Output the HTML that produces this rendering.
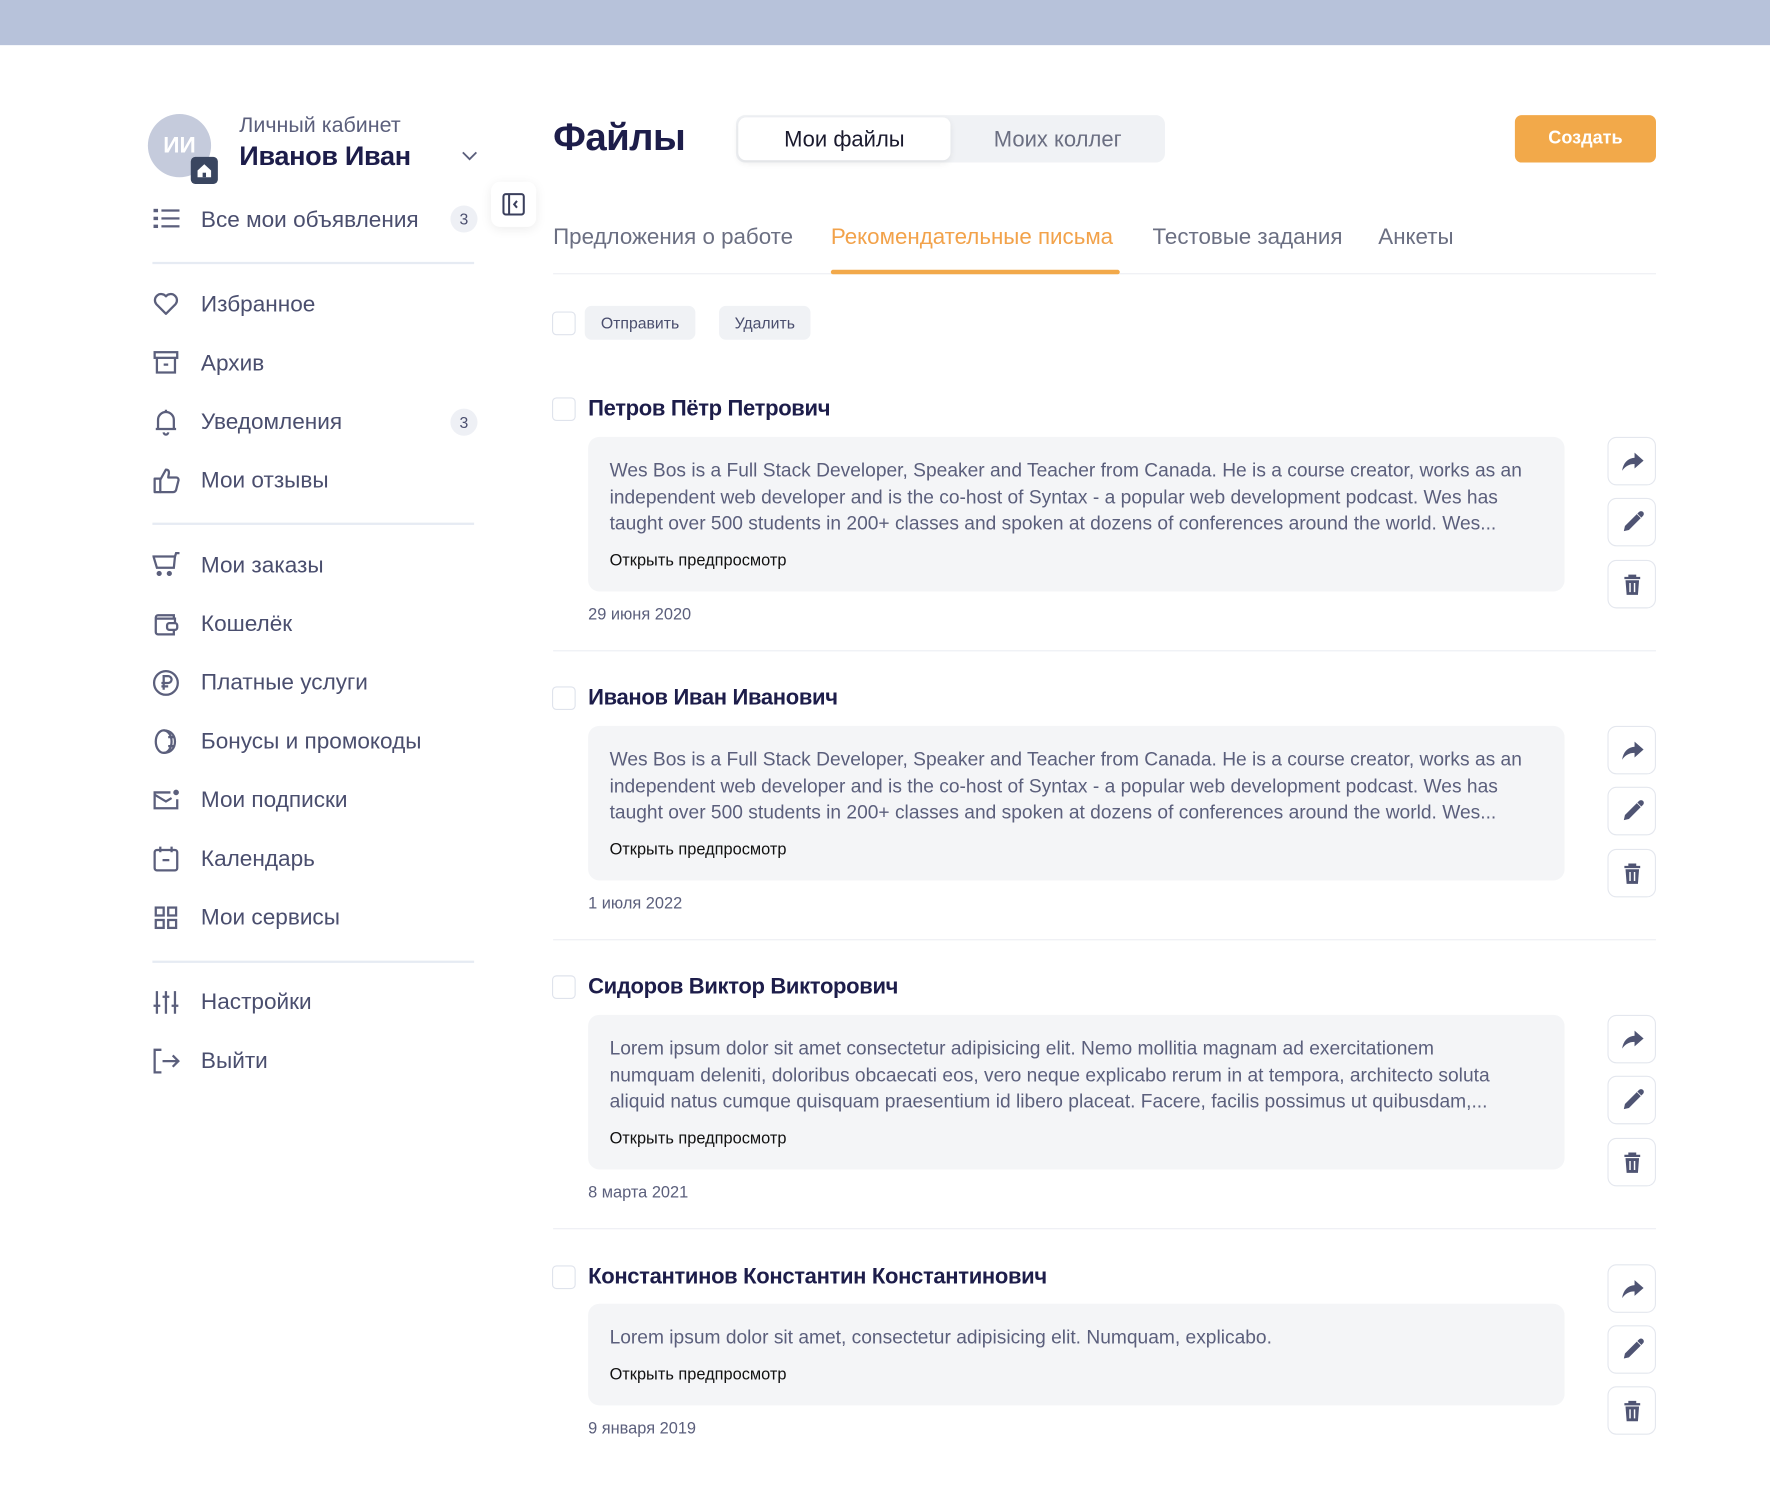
<!DOCTYPE html>
<html><head><meta charset="utf-8"><style>
html,body{margin:0;padding:0;background:#fff;width:1770px;height:1508px;overflow:hidden}
#w{position:absolute;left:0;top:0;width:1568px;height:1336px;transform:scale(1.12883);transform-origin:0 0;font-family:"Liberation Sans",sans-serif}
.a{position:absolute;white-space:nowrap}
.top{left:0;top:0;width:1568px;height:40px;background:#b7c2da}
.mi{position:absolute;left:135px;height:30px;width:300px}
.mi svg{position:absolute;left:0;top:3px}
.mi span{position:absolute;left:43px;top:5px;font-size:20px;color:#4a4e6e}
.badge{position:absolute;left:399px;width:24px;height:24px;border-radius:12px;background:#eef0f5;font-size:14px;color:#4a4e6e;text-align:center;line-height:24px}
.div{position:absolute;left:135px;width:285px;height:2px;background:#e6ebf3}
.tab{position:absolute;top:199px;font-size:19.8px;color:#6b6f82}
.cb{position:absolute;width:19px;height:19px;border:1px solid #dfe3ec;border-radius:4px;background:#fff}
.nm{position:absolute;left:521px;font-size:19.5px;font-weight:bold;color:#1d1d4a;letter-spacing:-0.3px}
.box{position:absolute;left:521px;width:865px;background:#f4f5f7;border-radius:10px}
.box p{margin:0;position:absolute;left:19px;top:18px;width:835px;font-size:17px;line-height:23.7px;color:#5b5f7c}
.box b{position:absolute;left:19px;font-size:14.5px;font-weight:normal;color:#111}
.dt{position:absolute;left:521px;font-size:14.5px;color:#5b5f7c}
.sep{position:absolute;left:490px;width:977px;height:1px;background:#eceef3}
.ab{position:absolute;left:1424px;width:41px;height:41px;border:1px solid #e4e7ee;border-radius:8px;background:#fff}
.ab svg{position:absolute;left:10px;top:10px}
</style></head><body><div id="w">
<div class="a top"></div>
<div class="a" style="left:131px;top:101px;width:56px;height:56px;border-radius:28px;background:#c5cbdc;color:#fff;font-weight:bold;font-size:20px;text-align:center;line-height:56px">ИИ</div>
<div class="a" style="left:169px;top:139px;width:24px;height:24px;border-radius:4px;background:#3a4660"><svg width="24" height="24" viewBox="0 0 24 24"><path d="M6 12 L12 6.5 L18 12 V18 H6 Z" fill="#fff"/><rect x="10.5" y="14" width="3" height="4" fill="#3a4660"/></svg></div>
<div class="a" style="left:212px;top:101px;font-size:19px;color:#5b5f7c">Личный кабинет</div>
<div class="a" style="left:212px;top:125px;font-size:24px;font-weight:bold;color:#1d1d4a;letter-spacing:-0.3px">Иванов Иван</div>
<svg class="a" style="left:408px;top:133px" width="16" height="10" viewBox="0 0 16 10"><path d="M2 2 L8 8 L14 2" stroke="#5b5f7c" stroke-width="1.6" fill="none"/></svg>
<div class="a" style="left:435px;top:161px;width:40px;height:40px;border-radius:8px;background:#fff;box-shadow:0 2px 10px rgba(0,0,0,.08)"><svg width="40" height="40" viewBox="0 0 40 40"><rect x="11" y="11" width="18" height="18" rx="2" stroke="#3a3f5c" stroke-width="1.8" fill="none"/><path d="M16 11 V29" stroke="#3a3f5c" stroke-width="1.8"/><path d="M23 17 L20.5 20 L23 23" stroke="#3a3f5c" stroke-width="1.8" fill="none"/></svg></div>

<div class="mi" style="top:179px"><svg width="26" height="24" viewBox="0 0 26 24" fill="#5b5f7c"><rect x="1" y="3" width="4" height="3"/><rect x="1" y="10" width="4" height="3"/><rect x="1" y="17" width="4" height="3"/><rect x="8" y="3.5" width="16" height="2"/><rect x="8" y="10.5" width="16" height="2"/><rect x="8" y="17.5" width="16" height="2"/></svg><span>Все мои объявления</span></div>
<div class="badge" style="top:182px">3</div>
<div class="div" style="top:232px"></div>
<div class="mi" style="top:254px"><svg width="26" height="24" viewBox="0 0 26 24"><path d="M12 21 L3.5 12.5 A5 5 0 0 1 12 5.5 A5 5 0 0 1 20.5 12.5 Z" stroke="#5b5f7c" stroke-width="2" fill="none" stroke-linejoin="round"/></svg><span>Избранное</span></div>
<div class="mi" style="top:306px"><svg width="26" height="24" viewBox="0 0 26 24" fill="none" stroke="#5b5f7c" stroke-width="2"><rect x="2" y="3" width="20" height="5"/><path d="M4 8 V21 H20 V8"/><path d="M10 14 H14"/></svg><span>Архив</span></div>
<div class="mi" style="top:358px"><svg width="26" height="26" viewBox="0 0 26 26" fill="none" stroke="#5b5f7c" stroke-width="2"><path d="M5 19 V11 A7 7 0 0 1 19 11 V19 H21 H3 Z"/><path d="M10 22 A2 2 0 0 0 14 22"/><path d="M12 2 V4"/></svg><span>Уведомления</span></div>
<div class="badge" style="top:362px">3</div>
<div class="mi" style="top:410px"><svg width="26" height="26" viewBox="0 0 26 26" fill="none" stroke="#5b5f7c" stroke-width="2" stroke-linejoin="round"><rect x="2" y="11" width="5" height="12"/><path d="M7 12 L12 3 C14 3 15 4 14.5 7 L14 10 H21 C23 10 23.5 12 23 13 L21 21 C20.5 22.5 19.5 23 18 23 H7"/></svg><span>Мои отзывы</span></div>
<div class="div" style="top:463px"></div>
<div class="mi" style="top:485px"><svg width="26" height="26" viewBox="0 0 26 26" fill="none" stroke="#5b5f7c" stroke-width="2"><path d="M1 5 H20 L19 15 H4 Z"/><path d="M20 5 L21 2 H24"/><circle cx="6" cy="20" r="1.3" fill="#5b5f7c"/><circle cx="15" cy="20" r="1.3" fill="#5b5f7c"/></svg><span>Мои заказы</span></div>
<div class="mi" style="top:537px"><svg width="26" height="26" viewBox="0 0 26 26" fill="none" stroke="#5b5f7c" stroke-width="2"><path d="M19 7 V5 H5 A2 2 0 0 0 3 7 V20 A2 2 0 0 0 5 22 H19 V18"/><path d="M3 8 H20 V12"/><rect x="13" y="12" width="9" height="6" rx="2"/></svg><span>Кошелёк</span></div>
<div class="mi" style="top:589px"><svg width="26" height="26" viewBox="0 0 26 26" fill="none" stroke="#5b5f7c" stroke-width="2"><circle cx="12" cy="13" r="10.5"/><path d="M10 19 V7 H14 A3 3 0 0 1 14 13 H8 M8 16 H14"/></svg><span>Платные услуги</span></div>
<div class="mi" style="top:641px"><svg width="26" height="26" viewBox="0 0 26 26" fill="none" stroke="#5b5f7c" stroke-width="2"><ellipse cx="10" cy="13" rx="7" ry="10"/><path d="M10 3 C17 3 20 8 20 13 C20 18 17 23 10 23"/><path d="M14 9 H19 M14 17 H19"/></svg><span>Бонусы и промокоды</span></div>
<div class="mi" style="top:693px"><svg width="26" height="26" viewBox="0 0 26 26" fill="none" stroke="#5b5f7c" stroke-width="2"><path d="M16 6 H2 V20 H22 V12"/><path d="M2 8 L12 14 L17 11"/><circle cx="21" cy="6" r="1.5" fill="#5b5f7c"/></svg><span>Мои подписки</span></div>
<div class="mi" style="top:745px"><svg width="26" height="26" viewBox="0 0 26 26" fill="none" stroke="#5b5f7c" stroke-width="2"><rect x="2" y="5" width="20" height="18" rx="2"/><path d="M7 2 V7 M17 2 V7 M9 14 H15"/></svg><span>Календарь</span></div>
<div class="mi" style="top:797px"><svg width="26" height="26" viewBox="0 0 26 26" fill="none" stroke="#5b5f7c" stroke-width="2"><rect x="3" y="4" width="7" height="7"/><rect x="14" y="4" width="7" height="7"/><rect x="3" y="15" width="7" height="7"/><rect x="14" y="15" width="7" height="7"/></svg><span>Мои сервисы</span></div>
<div class="div" style="top:851px"></div>
<div class="mi" style="top:872px"><svg width="26" height="26" viewBox="0 0 26 26" fill="none" stroke="#5b5f7c" stroke-width="2"><path d="M4 3 V23 M12 3 V23 M20 3 V23 M1 16 H7 M9 8 H15 M17 16 H23"/></svg><span>Настройки</span></div>
<div class="mi" style="top:924px"><svg width="26" height="26" viewBox="0 0 26 26" fill="none" stroke="#5b5f7c" stroke-width="2"><path d="M8 3 H2 V23 H8"/><path d="M9 13 H23 M18 8 L23 13 L18 18"/></svg><span>Выйти</span></div>

<div class="a" style="left:490px;top:103px;font-size:34px;font-weight:bold;color:#1d1d4a;letter-spacing:-0.5px">Файлы</div>
<div class="a" style="left:652px;top:102px;width:380px;height:42px;border-radius:8px;background:#f0f2f5"></div>
<div class="a" style="left:654px;top:104px;width:188px;height:38px;border-radius:7px;background:#fff;box-shadow:0 2px 6px rgba(0,0,0,.08);font-size:19.5px;color:#1a1a2e;text-align:center;line-height:40px">Мои файлы</div>
<div class="a" style="left:842px;top:104px;width:190px;height:38px;font-size:19.5px;color:#6b6f82;text-align:center;line-height:40px">Моих коллег</div>
<div class="a" style="left:1342px;top:102px;width:125px;height:42px;border-radius:6px;background:#f2a94a;color:#fff;font-weight:bold;font-size:16px;text-align:center;line-height:42px">Создать</div>

<div class="tab" style="left:490px">Предложения о работе</div>
<div class="tab" style="left:736px;color:#f2a24a">Рекомендательные письма</div>
<div class="tab" style="left:1021px">Тестовые задания</div>
<div class="tab" style="left:1221px">Анкеты</div>
<div class="a" style="left:490px;top:242px;width:977px;height:1px;background:#eceef3"></div>
<div class="a" style="left:736px;top:239px;width:256px;height:4px;border-radius:2px;background:#f2a94a"></div>

<div class="cb" style="left:489px;top:276px"></div>
<div class="a" style="left:518px;top:271px;width:98px;height:30px;border-radius:6px;background:#f0f2f5;font-size:14px;color:#4a4e6e;text-align:center;line-height:31px">Отправить</div>
<div class="a" style="left:637px;top:271px;width:81px;height:30px;border-radius:6px;background:#f0f2f5;font-size:14px;color:#4a4e6e;text-align:center;line-height:31px">Удалить</div>

<div class="cb" style="left:489px;top:352px"></div>
<div class="nm" style="top:351px">Петров Пётр Петрович</div>
<div class="box" style="top:387px;height:137px"><p>Wes Bos is a Full Stack Developer, Speaker and Teacher from Canada. He is a course creator, works as an independent web developer and is the co-host of Syntax - a popular web development podcast. Wes has taught over 500 students in 200+ classes and spoken at dozens of conferences around the world. Wes...</p><b style="top:102px">Открыть предпросмотр</b></div>
<div class="dt" style="top:537px">29 июня 2020</div>
<div class="sep" style="top:576px"></div>

<div class="cb" style="left:489px;top:608px"></div>
<div class="nm" style="top:607px">Иванов Иван Иванович</div>
<div class="box" style="top:643px;height:137px"><p>Wes Bos is a Full Stack Developer, Speaker and Teacher from Canada. He is a course creator, works as an independent web developer and is the co-host of Syntax - a popular web development podcast. Wes has taught over 500 students in 200+ classes and spoken at dozens of conferences around the world. Wes...</p><b style="top:102px">Открыть предпросмотр</b></div>
<div class="dt" style="top:793px">1 июля 2022</div>
<div class="sep" style="top:832px"></div>

<div class="cb" style="left:489px;top:864px"></div>
<div class="nm" style="top:863px">Сидоров Виктор Викторович</div>
<div class="box" style="top:899px;height:137px"><p style="width:790px">Lorem ipsum dolor sit amet consectetur adipisicing elit. Nemo mollitia magnam ad exercitationem numquam deleniti, doloribus obcaecati eos, vero neque explicabo rerum in at tempora, architecto soluta aliquid natus cumque quisquam praesentium id libero placeat. Facere, facilis possimus ut quibusdam,...</p><b style="top:102px">Открыть предпросмотр</b></div>
<div class="dt" style="top:1049px">8 марта 2021</div>
<div class="sep" style="top:1088px"></div>

<div class="cb" style="left:489px;top:1121px"></div>
<div class="nm" style="top:1120px">Константинов Константин Константинович</div>
<div class="box" style="top:1155px;height:90px"><p>Lorem ipsum dolor sit amet, consectetur adipisicing elit. Numquam, explicabo.</p><b style="top:55px">Открыть предпросмотр</b></div>
<div class="dt" style="top:1258px">9 января 2019</div>

<div id="btns"></div>
</div>
<script>
var tops=[[387,441,496],[643,697,752],[899,953,1008],[1120,1174,1228]];
var share='<svg width="22" height="22" viewBox="0 0 22 22"><path d="M13 3 L21 10 L13 17 V13 C8 13 5 15 2 19 C3 12 7 8 13 7.5 Z" fill="#4f5473"/></svg>';
var pen='<svg width="22" height="22" viewBox="0 0 22 22"><path d="M15 3.5 L18.5 7 L8 17.5 L3.5 18.5 L4.5 14 Z" fill="#4f5473"/><path d="M15.5 3 L17 1.5 A1.5 1.5 0 0 1 20.5 5 L19 6.5 Z" fill="#4f5473"/></svg>';
var bin='<svg width="22" height="22" viewBox="0 0 22 22"><path d="M4 5 H18 M8.5 5 V3 H13.5 V5" stroke="#4f5473" stroke-width="2" fill="none"/><path d="M5 7 H17 L16 20 H6 Z" fill="#4f5473"/><path d="M9 9.5 V17.5 M13 9.5 V17.5" stroke="#fff" stroke-width="1.3"/></svg>';
var h='';tops.forEach(function(t){h+='<div class="ab" style="top:'+t[0]+'px">'+share+'</div><div class="ab" style="top:'+t[1]+'px">'+pen+'</div><div class="ab" style="top:'+t[2]+'px">'+bin+'</div>';});
document.getElementById('btns').outerHTML=h;
</script>
</body></html>
